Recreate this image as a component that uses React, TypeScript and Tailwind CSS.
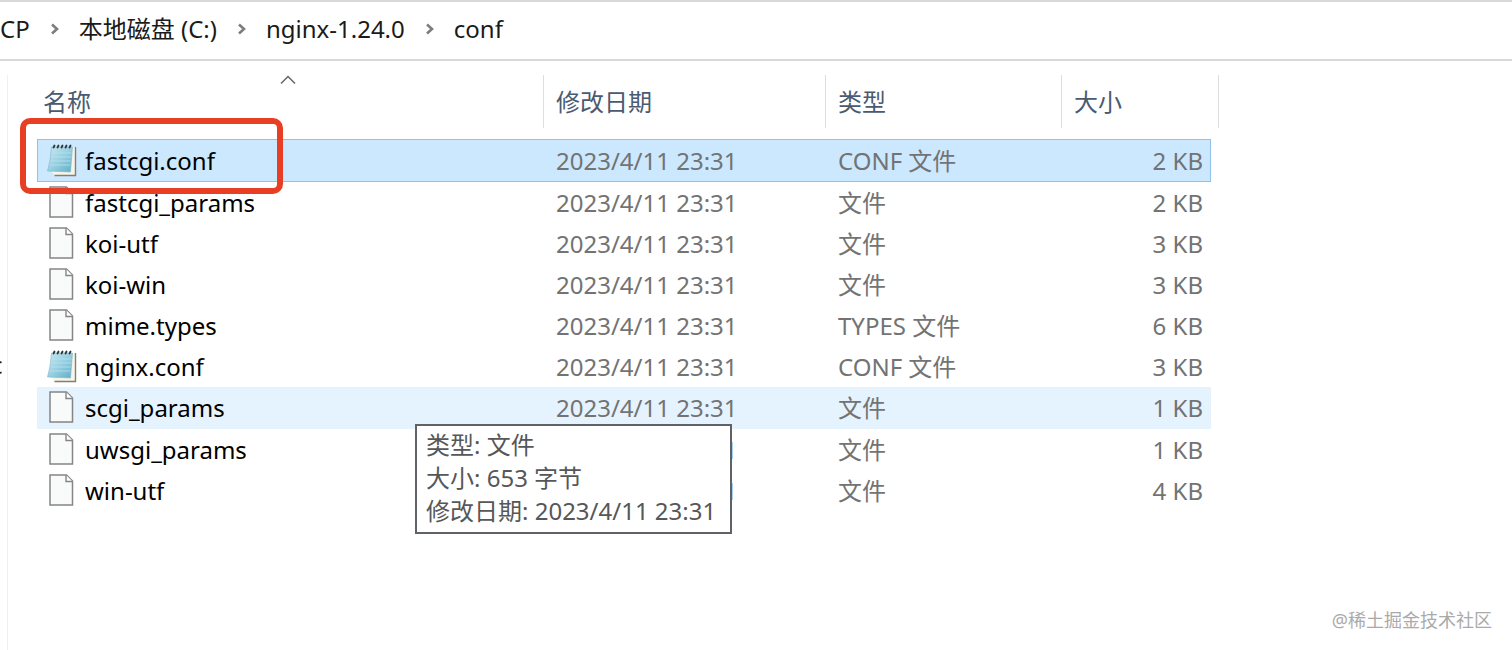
import type { ReactNode } from "react";

type FileRow = {
  name: string;
  type: string;
  size: string;
  notepad?: boolean;
};

const DATE = "2023/4/11 23:31";

const files: FileRow[] = [
  { name: "fastcgi.conf", type: "CONF 文件", size: "2 KB", notepad: true },
  { name: "fastcgi_params", type: "文件", size: "2 KB" },
  { name: "koi-utf", type: "文件", size: "3 KB" },
  { name: "koi-win", type: "文件", size: "3 KB" },
  { name: "mime.types", type: "TYPES 文件", size: "6 KB" },
  { name: "nginx.conf", type: "CONF 文件", size: "3 KB", notepad: true },
  { name: "scgi_params", type: "文件", size: "1 KB" },
  { name: "uwsgi_params", type: "文件", size: "1 KB" },
  { name: "win-utf", type: "文件", size: "4 KB" },
];

const selected = "fastcgi.conf";
const hovered = "scgi_params";

const crumbs = ["CP", "本地磁盘 (C:)", "nginx-1.24.0", "conf"];

function PageIcon() {
  return (
    <svg width="32" height="34" viewBox="0 0 32 34" className="shrink-0" aria-hidden="true">
      <path d="M4 1H20.5L26.5 7V31H4Z" fill="#f9fafa" stroke="#858585" strokeWidth="1.5" />
      <path d="M20 1V7.5H26.5" fill="#fff" stroke="#858585" strokeWidth="1.4" />
    </svg>
  );
}

function NotepadIcon() {
  return (
    <svg width="32" height="34" viewBox="0 0 32 34" className="shrink-0" aria-hidden="true">
      <defs>
        <linearGradient id="pad" x1="0" y1="0" x2="1" y2="1">
          <stop offset="0" stopColor="#c9e9f1" />
          <stop offset="0.5" stopColor="#98d0e1" />
          <stop offset="1" stopColor="#5fadc8" />
        </linearGradient>
      </defs>
      <path d="M9 3H29.5V31.5H8.5L6 28Z" fill="#f7f5ea" />
      <path d="M29.5 3V31.5H8.5" fill="none" stroke="#857e6c" strokeWidth="1.4" />
      <path d="M5.5 3H26.5L24.5 28L1.5 27Q4.5 17 5.5 3Z" fill="url(#pad)" stroke="#7db5c8" strokeWidth="0.6" />
      <path d="M5.5 9H25.5M5 13H25M4.4 17H24.6M3.6 21H24.2" stroke="#b9e1ec" strokeWidth="0.8" />
      <path
        d="M7.5 3.5L8.5 1.5M11.5 3.5L12.5 1.5M15.5 3.5L16.5 1.5M19.5 3.5L20.5 1.5M23.5 3.5L24.5 1.5"
        stroke="#30373b"
        strokeWidth="1.8"
        strokeLinecap="round"
      />
    </svg>
  );
}

function Chevron() {
  return (
    <svg width="49" height="12" viewBox="0 0 49 12" fill="none" aria-hidden="true">
      <path d="M22 1.5L27 6L22 10.5" stroke="#7d7d7d" strokeWidth="2.6" />
    </svg>
  );
}

function HeadCell({ children }: { children: ReactNode }) {
  return <div className="flex h-[53px] items-center border-l border-[#dedede] pl-3">{children}</div>;
}

export default function App() {
  return (
    <div className="flex min-h-screen flex-col overflow-hidden bg-white font-['Noto_Sans','Noto_Sans_CJK_SC',sans-serif] text-[24px] leading-8 text-[#737373]">
      {/* address bar */}
      <nav className="flex h-[61px] items-center border-t-2 border-b-2 border-[#d9d9d9] pb-1 text-[#1a1a1a]">
        {crumbs.map((crumb, i) => (
          <div key={crumb} className="flex items-center">
            {i > 0 && <Chevron />}
            <a href="#" className="whitespace-nowrap">
              {crumb}
            </a>
          </div>
        ))}
      </nav>

      <div className="flex grow pt-[14px]">
        {/* edge of the folder tree */}
        <aside className="flex w-2 shrink-0 overflow-hidden border-r border-[#f0f0f0] pt-[274px]">
          <span className="-ml-[9px] text-[#1a1a1a]">c</span>
        </aside>

        <main className="flex min-w-0 grow flex-col justify-between pl-[29px]">
          <table className="w-full max-w-[1174px] table-fixed border-separate border-spacing-0 whitespace-nowrap">
            <colgroup>
              <col />
              <col className="w-[282px]" />
              <col className="w-[236px]" />
              <col className="w-[150px]" />
            </colgroup>
            <thead className="text-left text-[#4a5a70]">
              <tr>
                <th className="relative p-0 pb-[11px] font-normal">
                  <div className="flex h-[53px] items-center pl-[6px]">名称</div>
                  <svg width="16" height="10" viewBox="0 0 16 10" fill="none" className="absolute top-0 left-[243px]" aria-hidden="true">
                    <path d="M1 8.5L8 1.5L15 8.5" stroke="#666" strokeWidth="1.5" />
                  </svg>
                </th>
                <th className="p-0 pb-[11px] font-normal">
                  <HeadCell>修改日期</HeadCell>
                </th>
                <th className="p-0 pb-[11px] font-normal">
                  <HeadCell>类型</HeadCell>
                </th>
                <th className="relative p-0 pb-[11px] font-normal">
                  <HeadCell>大小</HeadCell>
                  <span className="absolute top-0 -right-2 h-[53px] border-r border-[#dedede]" />
                </th>
              </tr>
            </thead>
            <tbody>
              {files.map((file) => (
                <tr
                  key={file.name}
                  className={
                    file.name === selected
                      ? "h-[43px] bg-[#cce8ff] outline outline-[#8fc3ea] -outline-offset-1"
                      : file.name === hovered
                        ? "h-[42px] bg-[#e5f3ff]"
                        : "h-[41px]"
                  }
                >
                  <td className="relative p-0 pl-[9px] text-black">
                    <div className="flex items-center gap-[7px]">
                      {file.notepad ? <NotepadIcon /> : <PageIcon />}
                      <span>{file.name}</span>
                    </div>
                    {file.name === selected && (
                      <div className="absolute -top-[21px] -left-[17px] z-10 h-[76px] w-[263px] rounded-[10px] border-6 border-[#e83f24]" />
                    )}
                    {file.name === hovered && (
                      <div
                        role="tooltip"
                        className="absolute top-[37px] left-[378px] z-10 border-2 border-[#5f6266] bg-white pt-[2px] pr-[14px] pb-[5px] pl-[9px] leading-[33px] text-[#575757]"
                      >
                        <p>类型: 文件</p>
                        <p>大小: 653 字节</p>
                        <p>修改日期: {DATE}</p>
                      </div>
                    )}
                  </td>
                  <td className="p-0 pl-[13px]">{DATE}</td>
                  <td className="p-0 pl-[13px]">{file.type}</td>
                  <td className="p-0 pr-2 text-right">{file.size}</td>
                </tr>
              ))}
            </tbody>
          </table>

          <footer className="self-end pr-5 pb-4 text-[18px] leading-7 text-[#aaa]">@稀土掘金技术社区</footer>
        </main>
      </div>
    </div>
  );
}
